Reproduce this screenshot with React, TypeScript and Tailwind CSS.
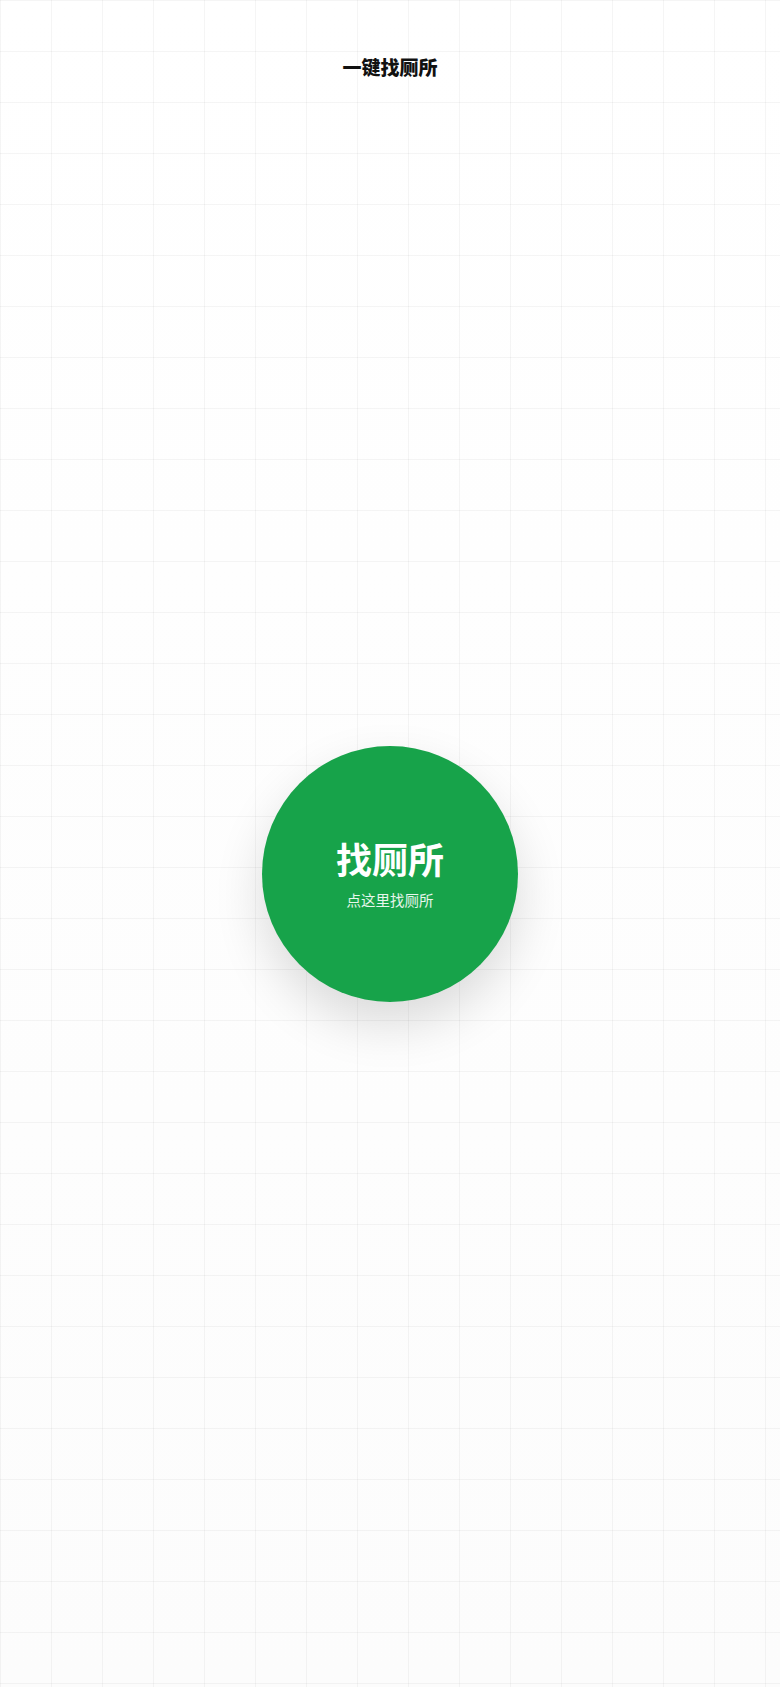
export default function App() {
  return (
    <div
      className="min-h-screen bg-gradient-to-b from-white to-[#fcfcfc]"
      style={{ fontFamily: '"Noto Sans CJK SC", "Noto Sans", sans-serif' }}
    >
      <div className="min-h-screen flex flex-col bg-[linear-gradient(to_right,rgba(0,0,0,0.04)_1px,transparent_1px),linear-gradient(to_bottom,rgba(0,0,0,0.04)_1px,transparent_1px)] bg-[size:51px_51px]">
        <header className="pt-[53px] text-center">
          <h1 className="text-[19px] leading-7 font-black text-[#111]">一键找厕所</h1>
        </header>

        <main className="flex-1 flex items-center justify-center pb-5">
          <button
            type="button"
            className="w-64 h-64 rounded-full bg-[#17a34a] shadow-[0_22px_50px_rgba(0,0,0,0.14)] flex flex-col items-center justify-center text-white"
          >
            <span className="text-4xl leading-10 font-bold">找厕所</span>
            <span className="mt-3 text-[14.5px] leading-5 text-white/90">点这里找厕所</span>
          </button>
        </main>
      </div>
    </div>
  );
}
